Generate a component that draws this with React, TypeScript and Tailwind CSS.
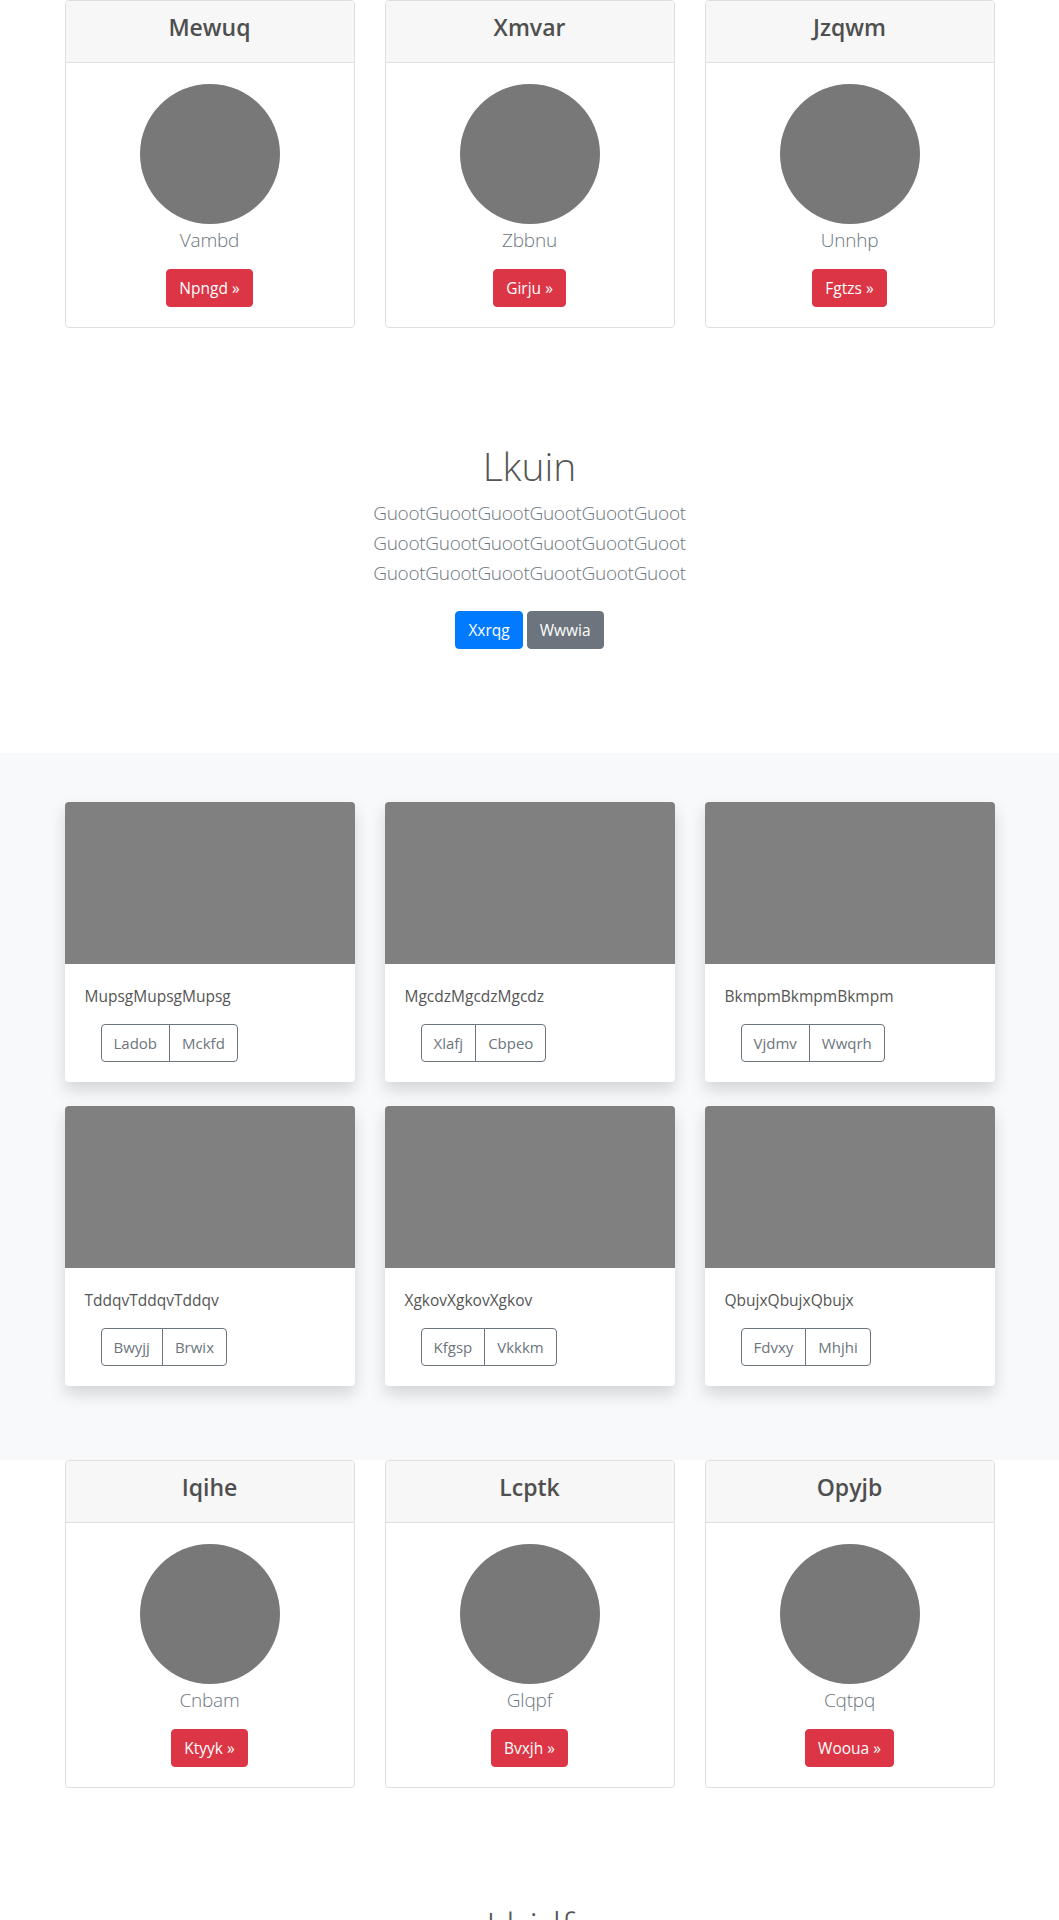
const font = "font-['Segoe_UI','Open_Sans',sans-serif]";

type Person = { title: string; name: string; action: string };
type Album = { text: string; a: string; b: string };

const topPeople: Person[] = [
  { title: 'Mewuq', name: 'Vambd', action: 'Npngd' },
  { title: 'Xmvar', name: 'Zbbnu', action: 'Girju' },
  { title: 'Jzqwm', name: 'Unnhp', action: 'Fgtzs' },
];

const bottomPeople: Person[] = [
  { title: 'Iqihe', name: 'Cnbam', action: 'Ktyyk' },
  { title: 'Lcptk', name: 'Glqpf', action: 'Bvxjh' },
  { title: 'Opyjb', name: 'Cqtpq', action: 'Wooua' },
];

const albums: Album[] = [
  { text: 'MupsgMupsgMupsg', a: 'Ladob', b: 'Mckfd' },
  { text: 'MgcdzMgcdzMgcdz', a: 'Xlafj', b: 'Cbpeo' },
  { text: 'BkmpmBkmpmBkmpm', a: 'Vjdmv', b: 'Wwqrh' },
  { text: 'TddqvTddqvTddqv', a: 'Bwyjj', b: 'Brwix' },
  { text: 'XgkovXgkovXgkov', a: 'Kfgsp', b: 'Vkkkm' },
  { text: 'QbujxQbujxQbujx', a: 'Fdvxy', b: 'Mhjhi' },
];

const PersonCard = ({ p }: { p: Person }) => (
  <div className="bg-white border border-[#dfdfdf] rounded-[4px] overflow-hidden">
    <div className="bg-[#f7f7f7] border-b border-[#dfdfdf] px-5 pt-3 pb-5">
      <h4 className="text-[23px] leading-[28.8px] font-semibold text-center text-[#4f4f4f]">{p.title}</h4>
    </div>
    <div className="flex flex-col items-center pt-[21px] pb-5 px-5">
      <div className="w-[140px] h-[140px] rounded-full bg-[#787878]" />
      <p className="mt-[1px] text-[19px] tracking-[-0.2px] leading-[30px] font-light text-[#6c757d]">{p.name}</p>
      <button className="mt-[14px] h-[38px] px-3 rounded-[4px] bg-[#dc3545] border border-[#dc3545] text-white text-[15.5px] leading-6">
        {p.action} »
      </button>
    </div>
  </div>
);

const PeopleRow = ({ people }: { people: Person[] }) => (
  <div className="w-[960px] mx-auto px-[15px] grid grid-cols-3 gap-[30px]">
    {people.map((p) => (
      <PersonCard key={p.title} p={p} />
    ))}
  </div>
);

const Hero = ({ title, word }: { title: string; word: string }) => {
  const line = word.repeat(6);
  return (
    <section className="pt-[114px] pb-[104px] text-center">
      <h1 className="text-[39px] leading-[48px] font-light text-[#555]">{title}</h1>
      <div className="mt-2 text-[19px] tracking-[-0.3px] leading-[30px] font-light text-[#6c757d]">
        <div>{line}</div>
        <div>{line}</div>
        <div>{line}</div>
      </div>
      <div className="mt-[23px] flex justify-center gap-[4px]">
        <button className="h-[38px] px-3 rounded-[4px] bg-[#007bff] border border-[#007bff] text-white text-[15.5px] leading-6">
          Xxrqg
        </button>
        <button className="h-[38px] px-3 rounded-[4px] bg-[#6c757d] border border-[#6c757d] text-white text-[15.5px] leading-6">
          Wwwia
        </button>
      </div>
    </section>
  );
};

const AlbumCard = ({ a }: { a: Album }) => (
  <div className="bg-white rounded-[4px] overflow-hidden shadow-[0_8px_16px_rgba(0,0,0,0.15)]">
    <div className="h-[162px] bg-[#808080]" />
    <div className="px-5 pt-5 pb-5">
      <p className="text-[15.5px] leading-6 text-[#555]">{a.text}</p>
      <div className="mt-4 ml-4 flex">
        <button className="h-[38px] px-3 rounded-l-[4px] border border-[#6c757d] text-[#6c757d] text-[15px] leading-6">
          {a.a}
        </button>
        <button className="h-[38px] px-3 -ml-px rounded-r-[4px] border border-[#6c757d] text-[#6c757d] text-[15px] leading-6">
          {a.b}
        </button>
      </div>
    </div>
  </div>
);

export default function App() {
  return (
    <div className={`${font} bg-white min-h-screen`}>
      <PeopleRow people={topPeople} />
      <Hero title="Lkuin" word="Guoot" />
      <section className="bg-[#f8f9fa] pt-[49px] pb-[74px]">
        <div className="w-[960px] mx-auto px-[15px] grid grid-cols-3 gap-x-[30px] gap-y-[24px]">
          {albums.map((a) => (
            <AlbumCard key={a.text} a={a} />
          ))}
        </div>
      </section>
      <PeopleRow people={bottomPeople} />
      <Hero title="Lhjdf" word="Kvnoe" />
    </div>
  );
}
